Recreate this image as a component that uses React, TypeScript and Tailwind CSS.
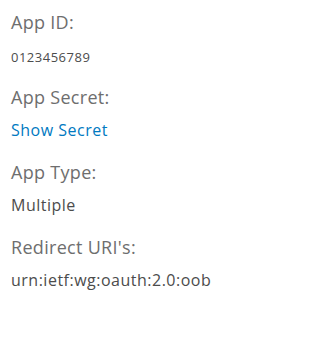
const fields = [
  { label: "App ID:", value: "0123456789", kind: "small" },
  { label: "App Secret:", value: "Show Secret", kind: "link" },
  { label: "App Type:", value: "Multiple", kind: "text" },
  { label: "Redirect URI's:", value: "urn:ietf:wg:oauth:2.0:oob", kind: "text" },
];

const App = () => {
  return (
    <div className="w-[314px] h-[342px] bg-white px-[11px] pt-[10px] font-['Open_Sans',sans-serif]">
      <dl className="flex flex-col">
        {fields.map((f) => (
          <div key={f.label} className="flex flex-col h-[75px]">
            <dt className="text-[18px] leading-6 tracking-[0.3px] text-[#6e6e6e]">{f.label}</dt>
            <dd
              className={
                f.kind === "small"
                  ? "mt-[13px] text-[13px] leading-5 tracking-[0.5px] text-[#4c4c4c]"
                  : f.kind === "link"
                  ? "mt-[11px] text-[16px] leading-5 tracking-[0.5px] text-[#0079c1]"
                  : "mt-[11px] text-[16px] leading-5 tracking-[0.5px] text-[#4c4c4c]"
              }
            >
              {f.value}
            </dd>
          </div>
        ))}
      </dl>
    </div>
  );
};

export default App;
